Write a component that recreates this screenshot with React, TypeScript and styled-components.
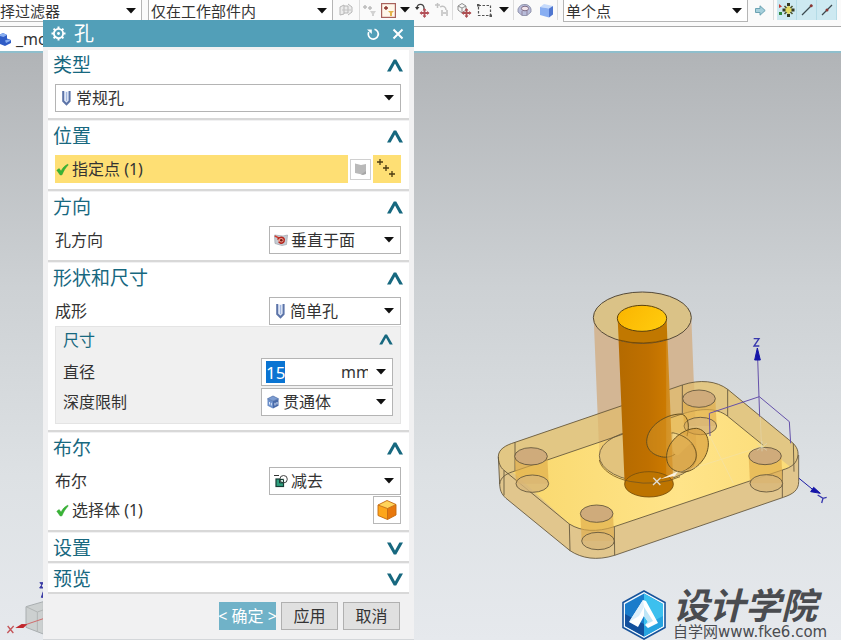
import React, { useEffect, useRef, type ReactNode } from "react";
import styled, { createGlobalStyle, css } from "styled-components";

const GlobalStyle = createGlobalStyle`
  * { box-sizing: border-box; }
  body {
    margin: 0;
    font-family: "Noto Sans", "Noto Sans CJK SC", sans-serif;
    font-size: 16px;
    color: #333;
    overflow: hidden;
  }
  button, select, input { font: inherit; color: inherit; }
  svg { display: block; flex: none; }
`;

const Page = styled.div`
  position: relative;
  display: flex;
  flex-direction: column;
  min-height: 100vh;
`;

/* ---------- top bars ---------- */

const Toolbar = styled.header`
  display: flex;
  align-items: flex-start;
  height: 27px;
  background: #fafafa;
  border-bottom: 1px solid #a9a9a9;
  overflow: hidden;
`;

const ToolSelect = styled.label<{ $w: number; $flush?: boolean }>`
  display: flex;
  align-items: center;
  width: ${(p) => p.$w}px;
  height: 22px;
  padding: 0 5px 0 ${(p) => (p.$flush ? 0 : 2)}px;
  background: #fff;
  border: 1px solid #b5b5b5;
  border-top: 0;
  ${(p) => p.$flush && "border-left: 0;"}
  font-size: 15px;
  flex: none;
`;

const PlainSelect = styled.select`
  flex: 1;
  min-width: 0;
  height: 100%;
  padding: 0;
  border: 0;
  outline: 0;
  background: transparent;
  appearance: none;
`;

const ToolGroup = styled.div<{ $w: number }>`
  display: flex;
  align-items: center;
  justify-content: space-around;
  width: ${(p) => p.$w}px;
  height: 20px;
  border-right: 1px solid #dcdcdc;
  flex: none;
`;

const IconButton = styled.button<{ $on?: boolean }>`
  display: flex;
  align-items: center;
  justify-content: center;
  min-width: 12px;
  height: 20px;
  padding: 0;
  border: 0;
  background: transparent;
  ${(p) =>
    p.$on &&
    css`
      width: 20px;
      background: #cde9f1;
      border-right: 1px solid #b4dbe6;
    `}
`;

const Spacer = styled.div<{ $w: number }>`
  width: ${(p) => p.$w}px;
  flex: none;
`;

const TabStrip = styled.nav`
  display: flex;
  align-items: center;
  gap: 4px;
  height: 26px;
  background: #fff;
  border-bottom: 2px solid #8fbfcd;
`;

const Viewport = styled.main`
  position: relative;
  flex: 1;
  background: linear-gradient(#b1b4b7 0%, #cdd1d4 40%, #dde1e4 72%, #e6e9ed 100%);
`;

const ModelView = styled.svg`
  position: absolute;
  right: 0;
  top: 227px;
`;

const Triad = styled.svg`
  position: absolute;
  left: 0;
  bottom: 0;
`;

const Watermark = styled.div`
  position: absolute;
  right: 9px;
  bottom: 0;
  display: flex;
  align-items: flex-end;
  gap: 7px;
`;

const Brand = styled.div`
  display: flex;
  flex-direction: column;
  gap: 4px;
  min-width: 159px;
  color: #4a4c50;
`;

const BrandName = styled.strong`
  font: italic 700 36px/36px "Noto Sans CJK SC", sans-serif;
`;

const BrandUrl = styled.span`
  font: 15px/15px "DejaVu Sans", "Noto Sans CJK SC", sans-serif;
  white-space: nowrap;
`;

/* ---------- dialog ---------- */

const Dialog = styled.section`
  position: absolute;
  left: 43px;
  top: 20px;
  width: 371px;
  background: #f1f1f2;
  border-bottom: 1px solid #d4d7da;
`;

const TitleBar = styled.div`
  display: flex;
  align-items: center;
  height: 27px;
  padding: 0 9px 0 8px;
  background: #529fb8;
  color: #fff;
`;

const DialogTitle = styled.h1`
  flex: 1;
  margin: 0 0 0 8px;
  font-size: 20px;
  line-height: 26px;
  font-weight: 400;
`;

const TitleButton = styled.button`
  margin-left: 11px;
  padding: 0;
  border: 0;
  background: none;
  color: #fff;
`;

const Groups = styled.div`
  display: flex;
  flex-direction: column;
  gap: 1px;
  padding: 3px 5px 0;
`;

const Group = styled.section`
  background: #fff;
  border-bottom: 2px solid #d8d8d8;
`;

const GroupHeader = styled.button`
  display: flex;
  align-items: center;
  justify-content: space-between;
  width: 100%;
  height: 28px;
  padding: 2px 6px 0 5px;
  border: 0;
  background: none;
  color: #17687f;
  font-size: 19px;
  line-height: 26px;
`;

const GroupBody = styled.div`
  display: flex;
  flex-direction: column;
  gap: 1px;
  padding: 6px 8px 6px 7px;
`;

const Row = styled.div`
  display: flex;
  align-items: center;
  justify-content: space-between;
  height: 28px;
  line-height: 20px;
`;

const Field = styled.label<{ $full?: boolean }>`
  display: flex;
  align-items: center;
  gap: 3px;
  width: ${(p) => (p.$full ? "100%" : "132px")};
  height: 28px;
  padding: 0 6px 0 4px;
  border: 1px solid #b4b4b4;
  background: #fff;
`;

const SizeBox = styled.section`
  padding: 0 7px 7px;
  background: #f0f0f0;
  border: 1px solid #e4e4e4;
`;

const SizeHeader = styled.button`
  display: flex;
  align-items: center;
  justify-content: space-between;
  width: 100%;
  height: 31px;
  padding: 0 0 6px;
  border: 0;
  background: none;
  color: #17687f;
  line-height: 20px;
`;

const SizeRows = styled.div`
  display: flex;
  flex-direction: column;
  gap: 2px;
`;

const ValueInput = styled.input`
  flex: 1;
  min-width: 0;
  height: 22px;
  padding: 0;
  border: 0;
  outline: 0;
  font-size: 17px;
  background: transparent;
  &::selection { background: #0a74d2; color: #fff; }
`;

const UnitSelect = styled(PlainSelect)`
  flex: none;
  width: 27px;
  text-overflow: clip;
`;

const PickRow = styled(Row)`
  gap: 2px;
`;

const PickLabel = styled.div<{ $active?: boolean }>`
  display: flex;
  flex: 1;
  align-items: center;
  gap: 3px;
  height: 28px;
  padding-left: 1px;
  background: ${(p) => (p.$active ? "#fedf74" : "transparent")};
`;

const SmallTool = styled.button`
  display: flex;
  align-items: center;
  justify-content: center;
  width: 21px;
  height: 21px;
  padding: 0;
  border: 1px solid #d0d0d0;
  background: #fff;
`;

const LargeTool = styled.button<{ $active?: boolean }>`
  display: flex;
  align-items: center;
  justify-content: center;
  width: 28px;
  height: 28px;
  padding: 0;
  border: ${(p) => (p.$active ? "0" : "1px solid #b8b8b8")};
  background: ${(p) => (p.$active ? "#fedf74" : "#fff")};
`;

const Footer = styled.div`
  display: flex;
  justify-content: flex-end;
  gap: 5px;
  padding: 8px 14px 9px;
`;

const ActionButton = styled.button<{ $primary?: boolean }>`
  display: flex;
  align-items: center;
  justify-content: center;
  width: 57px;
  height: 28px;
  padding: 0;
  line-height: 20px;
  white-space: nowrap;
  border: 1px solid ${(p) => (p.$primary ? "#70b2c8" : "#b0b0b0")};
  background: ${(p) => (p.$primary ? "#70b2c8" : "#e0e0e0")};
  color: ${(p) => (p.$primary ? "#fff" : "#333")};
`;

/* ---------- icons ---------- */

const Caret = () => (
  <svg width="10" height="6" viewBox="0 0 10 6"><path d="M0 0H10L5 5.6Z" fill="#111" /></svg>
);

const Chevron = ({ down, small }: { down?: boolean; small?: boolean }) => (
  <svg width={small ? 14 : 16} height={small ? 11 : 13} viewBox="0 0 16 13">
    <path d={down ? "M0 .5H3.6L8 8.5 12.4.5H16L9.2 12.5H6.8Z" : "M0 12.5H3.6L8 4.5 12.4 12.5H16L9.2.5H6.8Z"} fill="#17687f" />
  </svg>
);

const Check = () => (
  <svg width="13" height="13" viewBox="0 0 13 13">
    <path d="M.8 7.2 3.2 5.6 5 8.2C6.6 5 8.6 2.6 11.8 1.2L12.2 2C9.6 4.6 7.6 7.8 6 11.8L4.2 12Z" fill="#38b535" stroke="#2a9d2a" strokeWidth=".5" />
  </svg>
);

const HoleIcon = () => (
  <svg width="13" height="16" viewBox="0 0 13 16">
    <path d="M3 1.5V11L6.5 14.8 10 11V1.5Z" fill="#dfe7f7" />
    <path d="M3.2 1V11L6.5 14.3 9.6 11V1" fill="none" stroke="#5c74a8" strokeWidth="2" />
    <path d="M6.6 2V11" stroke="#9db3dc" />
  </svg>
);

const NormalIcon = () => (
  <svg width="14" height="14" viewBox="0 0 14 14">
    <path d="M.5 2 9 3 13.5 2 12.5 11.5 8 12.5 1 10.5Z" fill="#c6ccd4" stroke="#a0a6ae" strokeWidth=".7" />
    <path d="m.8 3 4.5 2.2" stroke="#d03c31" strokeWidth="1.5" />
    <path d="M3.5 6.5C5 3.5 9.5 3.6 10.3 6.5 10.5 9.5 8 10.6 6.4 10L4.6 8.8" fill="#eba595" stroke="#b6261e" strokeWidth="1.4" />
    <circle cx="7.3" cy="7.2" r="1.3" fill="#7c1a14" />
  </svg>
);

const ThroughIcon = () => (
  <svg width="14" height="14" viewBox="0 0 14 14">
    <path d="M1.5 3.8 7 6V13.4L1.5 10.8Z" fill="#6b8fc9" />
    <path d="M12.5 3.8 7 6V13.4L12.5 10.8Z" fill="#486aa8" />
    <path d="M1.5 3.8 7 1 12.5 3.8 7 6Z" fill="#7d9dd2" stroke="#5474ac" strokeWidth=".8" />
    <path d="M3.5 7V9.5M5.3 7.8V10.5M9 7.8V10.5M11 7V9.5" stroke="#dce7fa" />
  </svg>
);

const SubtractIcon = () => (
  <svg width="14" height="14" viewBox="0 0 14 14">
    <path d="M0 1.5H5" stroke="#333" />
    <rect x="2" y="5" width="7.5" height="7.5" fill="#2fa07e" stroke="#173d35" strokeWidth="1.2" />
    <circle cx="9.6" cy="5.2" r="3.7" fill="#fff" fillOpacity=".75" stroke="#444" />
    <path d="M5.5 9V5.5H9.5V8.8Z" fill="none" stroke="#173d35" />
  </svg>
);

const CubeIcon = () => (
  <svg width="22" height="22" viewBox="0 0 22 22">
    <path d="M2 6 11.5 9.5V20.5L2 16.5Z" fill="#fda61b" />
    <path d="M20 5.5 11.5 9.5V20.5L20 16Z" fill="#e8780c" />
    <path d="M2 6 11 1.5 20 5.5 11.5 9.5Z" fill="#ffd45a" />
    <path d="M2 6 11 1.5 20 5.5V16L11.5 20.5 2 16.5ZM2 6 11.5 9.5 20 5.5M11.5 9.5V20.5" fill="none" stroke="#c4690e" strokeWidth=".9" />
  </svg>
);

const PointsIcon = () => (
  <svg width="22" height="22" viewBox="0 0 22 22">
    <path d="M1 4H7M4 1V7M7 10H13M10 7V13M13 16H19M16 13V19" stroke="#4b3b12" strokeWidth="1.3" />
  </svg>
);

const SketchIcon = () => (
  <svg width="13" height="14" viewBox="0 0 13 14">
    <path d="M1 1.5 7 3 12 2V11L8 12.5 1 11Z" fill="#b9b9b9" /><path d="M7 12.5 12 9V12L9 13Z" fill="#a6a6a6" />
  </svg>
);

const GearIcon = () => (
  <svg width="15" height="15" viewBox="0 0 15 15">
    <circle cx="7.5" cy="7.5" r="4.6" fill="none" stroke="#fff" strokeWidth="1.8" />
    <circle cx="7.5" cy="7.5" r="1.4" fill="#fff" />
    <path d="M7.5 .5V3M7.5 12V14.5M.5 7.5H3M12 7.5H14.5M2.6 2.6 4.2 4.2M10.8 10.8 12.4 12.4M2.6 12.4 4.2 10.8M10.8 4.2 12.4 2.6" stroke="#fff" strokeWidth="2" />
  </svg>
);

const ResetIcon = () => (
  <svg width="14" height="14" viewBox="0 0 14 14">
    <path d="M8.5 2.2A5 5 0 1 1 2.7 5" fill="none" stroke="#fff" strokeWidth="1.7" />
    <path d="M1 2.5H5.8V7Z" fill="#fff" />
  </svg>
);

const CloseIcon = () => (
  <svg width="14" height="14" viewBox="0 0 14 14"><path d="M2.5 2.5 11.5 11.5M11.5 2.5 2.5 11.5" stroke="#fff" strokeWidth="2" /></svg>
);

const GhostIcon = () => (
  <svg width="16" height="16" viewBox="0 0 16 16">
    <path d="M2 5 6 3V12L2 13ZM6 4H10V11H6M10 2 14 5V10L10 13" fill="#ececec" stroke="#b7b7b7" />
    <path d="M4 8H13" stroke="#c4c4c4" />
  </svg>
);

const GhostPoints = () => (
  <svg width="15" height="16" viewBox="0 0 15 16">
    <path d="M1 5H5M3 3V7M6 6H10M8 4V8" stroke="#bdbdbd" strokeWidth="1.5" />
    <path d="M8 9H14L12 12V14H10V12Z" fill="#d2d2d2" />
  </svg>
);

const FilterBoxIcon = () => (
  <svg width="15" height="15" viewBox="0 0 15 15">
    <rect x=".6" y=".6" width="13.8" height="13.8" fill="#fff7ea" stroke="#a8625c" strokeWidth="1.2" />
    <path d="M3 5H7M5 3V7" stroke="#8b2f28" strokeWidth="1.3" />
    <path d="M7 8H13L11 10V13H9V10Z" fill="#e3b34c" />
  </svg>
);

const TurnIcon = () => (
  <svg width="15" height="16" viewBox="0 0 15 16">
    <path d="M2 6C2 1.5 9 1 9 6V8" fill="none" stroke="#444" strokeWidth="1.3" />
    <path d="M0 5 2 8 4.5 5Z" fill="#333" />
    <path d="M9.5 7V15M5.5 11H13.5" stroke="#b35058" strokeWidth="1.8" />
    <path d="M9.5 6 7.5 8.5H11.5ZM9.5 16 7.5 13.5H11.5ZM4.5 11 7 9V13ZM14.5 11 12 9V13Z" fill="#b35058" />
  </svg>
);

const GhostTurn = () => (
  <svg width="16" height="16" viewBox="0 0 16 16">
    <path d="M1 3H6M3.5 1V6M6 5C9 3 12 5 12 8" fill="none" stroke="#c2c2c2" strokeWidth="1.5" />
    <path d="M8 8V14M13 8V14M8 11H13" stroke="#cdcdcd" strokeWidth="2" />
  </svg>
);

const BoxMoveIcon = () => (
  <svg width="16" height="16" viewBox="0 0 16 16">
    <path d="M2 4 6 1.5 10 4V8L6 11 2 8ZM2 4 6 6 10 4M6 6V11" fill="#f5f5f5" stroke="#8f8f8f" />
    <path d="M10.5 7V15M6.5 11H14.5" stroke="#ad4f52" strokeWidth="1.8" />
    <path d="M10.5 6 8.5 8.5H12.5ZM10.5 16 8.5 13.5H12.5ZM5.5 11 8 9V13ZM15.5 11 13 9V13Z" fill="#ad4f52" />
  </svg>
);

const MarqueeIcon = () => (
  <svg width="15" height="13" viewBox="0 0 15 13">
    <rect x="1.5" y="1.5" width="12" height="10" fill="none" stroke="#555" strokeWidth="1.2" strokeDasharray="2.5 1.5" />
    <path d="M0 0H2.5V2.5H0ZM12.5 10.5H15V13H12.5Z" fill="#555" />
  </svg>
);

const DiscIcon = () => (
  <svg width="15" height="14" viewBox="0 0 15 14">
    <path d="M1 6C3 2 5 1.5 8 1.5S13 3 14 6V9L10 12.5H5L1 9Z" fill="#b8bcda" stroke="#8386a0" strokeWidth=".8" />
    <ellipse cx="8" cy="5.5" rx="3.6" ry="2.3" fill="#f1e4ea" stroke="#7e6d86" />
    <path d="M5 8V12M10 8V12" stroke="#8d819c" />
  </svg>
);

const BlueBox = () => (
  <svg width="15" height="15" viewBox="0 0 15 15">
    <path d="M1 4 5 1 14 3 10 5.5Z" fill="#c5dafc" />
    <path d="M1 4 10 5.5V14.5L1 12Z" fill="#88aef2" />
    <path d="M10 5.5 14 3V11.5L10 14.5Z" fill="#4f76d0" />
  </svg>
);

const ArrowIcon = () => (
  <svg width="11" height="11" viewBox="0 0 11 11"><path d="M.5 3.5H5V.8L10.2 5.5 5 10.2V7.5H.5Z" fill="#a5cfdb" stroke="#6ba2b2" /></svg>
);

const SnapIcon = () => (
  <svg width="16" height="14" viewBox="0 0 16 14">
    <path d="M0 1 3 3.5 0 5Z" fill="#c43b34" /><path d="M0 9H3V12H0Z" fill="#2d8a40" />
    <path d="M9.5 2.5 14 7 9.5 11.5 5 7Z" fill="#e0da62" />
    <path d="M8 0H11V3H8ZM8 11H11V14H8ZM3.5 5.5H6.5V8.5H3.5ZM12.5 5.5H15.5V8.5H12.5Z" fill="#343a25" />
    <path d="M5.5 3 7.5 5M13.5 3 11.5 5M5.5 11 7.5 9M13.5 11 11.5 9" stroke="#4c5430" strokeWidth="1.6" />
  </svg>
);

const LineIcon = ({ mid }: { mid?: boolean }) => (
  <svg width="12" height="12" viewBox="0 0 12 12">
    <path d="M1 11 11 1" stroke="#3c4a4f" strokeWidth="1.3" />
    <circle cx={mid ? 6 : 10.2} cy={mid ? 6 : 1.8} r="1.5" fill="#8a3532" />
  </svg>
);

const PartIcon = () => (
  <svg width="12" height="15" viewBox="0 0 12 15">
    <path d="M0 2.5 3 1 7 3V6.5L11 8V11L5 14 0 12Z" fill="#2f5cc6" />
    <path d="M0 2.5 3 1 7 3 3.5 5 0 4ZM5 8.5 8 7.5 11 8.5 6 11Z" fill="#88aef1" />
  </svg>
);

const Hexagon = () => (
  <svg width="44" height="50" viewBox="0 0 44 50">
    <path d="M22 1 43 12.5V37.5L22 49 1 37.5V12.5Z" fill="#f4fbff" stroke="#17539b" strokeWidth="1.6" />
    <path d="M22 3.5 41 14V36L22 46.5 3 36V14Z" fill="#1a7ccb" />
    <path d="M22 3.5 41 14V36L22 46.5Z" fill="#3cc0ee" />
    <path d="M3 24 22 34V46.5L3 36Z" fill="#12509d" />
    <path d="M22 36 41 26V36L22 46.5Z" fill="#26a3e0" />
    <path d="M21 10 7 32 16 37 22 26 26 32 23 35 26 38 36 33 24 11Z" fill="#fff" />
    <path d="M22 17 22 26 26 32 23 35 31 31Z" fill="#bfe6f7" />
    <path d="M21 10 22 17 17 26 7 32Z" fill="#dceffb" />
  </svg>
);

/* ---------- 3D scene ---------- */

const holes = [
  { x: 657, y: 356 },
  { x: 153, y: 529 },
  { x: 855, y: 528 },
  { x: 350, y: 701 },
];

const Model = () => (
  <ModelView width="361" height="290" viewBox="0 0 1083 870" role="img" aria-label="3D">
    <defs>
      <linearGradient id="bore" x1="0" x2="1">
        <stop offset="0" stopColor="#b46a00" /><stop offset=".55" stopColor="#bf7000" />
        <stop offset=".86" stopColor="#cb7900" /><stop offset=".88" stopColor="#d08a1c" /><stop offset="1" stopColor="#d5922c" />
      </linearGradient>
      <linearGradient id="boreTop" x1="0" x2="1" y2=".4"><stop offset="0" stopColor="#fab400" /><stop offset="1" stopColor="#ffc90c" /></linearGradient>
      <linearGradient id="floor" x1="0" x2="1"><stop offset="0" stopColor="#f9d86d" /><stop offset=".6" stopColor="#ffe489" /><stop offset="1" stopColor="#fbdc78" /></linearGradient>
    </defs>
    <path d="M341 113 358 527A146 78 0 0 0 650 527L634 113Z" fill="#d3b694" />
    <path d="M55 530C55 508 76 496 105 487L607 315C660 297 710 303 743 328L925 478C944 492 955 505 954 525L956 605C956 630 940 642 910 652L404 826C350 843 305 835 270 812L78 655C63 641 60 630 59 612Z" fill="#e1c68d" />
    <path d="M55 530C55 508 76 496 105 487L607 315C660 297 710 303 743 328L925 478C950 496 955 510 954 525 951 550 935 562 907 570L403 740C350 757 305 755 268 732L72 571C60 562 55 545 55 530Z" fill="#e2c784" />
    <path d="M98 575 600 404C660 384 708 382 742 408L930 560 907 570 403 740C350 757 305 755 268 732Z" fill="url(#floor)" />
    <path d="M353 400 430 374V470L358 527ZM560 331 642 306 650 527 560 470Z" fill="#cf9a55" fillOpacity=".28" />
    <ellipse cx="504" cy="527" rx="146" ry="78" fill="#e2c37d" stroke="#65553a" strokeWidth="2.5" />
    <g fill="none" stroke="#5d5138" strokeWidth="2.5">
      <path d="M55 530C55 508 76 496 105 487L607 315C660 297 710 303 743 328L925 478C950 496 955 510 954 525 951 550 935 562 907 570L403 740C350 757 305 755 268 732L72 571C60 562 55 545 55 530Z" />
      <path d="M59 612C60 630 63 641 78 655L270 812C305 835 350 843 404 826L910 652C940 642 956 630 956 605V525M55 530 59 612M268 732 270 812M403 740 404 826M907 570V652" />
      <path d="M105 487V572M607 315V400M743 328V408M72 571V646M940 490 942 575" />
      <path d="M59 612C62 590 80 580 108 572L600 404C660 384 708 382 742 408L850 496" />
    </g>
    {holes.map((h) => (
      <g key={h.x} stroke="#5d5138" strokeWidth="2.5">
        <path d={`M${h.x - 49} ${h.y}L${h.x - 45} ${h.y + 82}H${h.x + 53}L${h.x + 49} ${h.y}Z`} fill="#dfac49" fillOpacity=".65" stroke="none" />
        <ellipse cx={h.x + 4} cy={h.y + 82} rx="49" ry="26" fill="#d8b779" fillOpacity=".8" />
        <ellipse cx={h.x} cy={h.y} rx="49" ry="26" fill="#cfab7b" />
      </g>
    ))}
    <path d="M413 115 434 613A73 38 0 0 0 580 613L560 115Z" fill="url(#bore)" />
    <ellipse cx="507" cy="613" rx="73" ry="38" fill="#bd7400" stroke="#76510e" strokeWidth="2.5" />
    <path d="M358 540A146 78 0 0 0 600 590" fill="none" stroke="#75551f" strokeWidth="2.5" />
    <ellipse cx="487" cy="113" rx="147" ry="77" fill="#dac287" stroke="#554a38" strokeWidth="3" />
    <path d="M413 118A74 39 0 0 0 560 118L562 178A147 77 0 0 1 416 180Z" fill="#c17800" />
    <path d="M417 180A147 77 0 0 0 562 178" fill="none" stroke="#7b4c00" strokeWidth="3" />
    <ellipse cx="486" cy="115" rx="74" ry="39" fill="url(#boreTop)" stroke="#5b420e" strokeWidth="3" />
    <g stroke="#66501f" strokeWidth="3">
      <path d="M500 485C500 440 555 402 603 402 630 407 632 455 610 494 588 531 560 540 526 524 508 515 500 500 500 485Z" fill="#dba33a" fillOpacity=".35" />
      <path d="M578 458C606 456 628 469 641 487 624 492 606 517 594 526 576 525 575 500 578 458Z" fill="#f0d487" stroke="none" />
      <path d="M560 535C556 490 605 445 650 445 684 450 696 492 674 532 648 574 608 586 580 569 567 561 561 549 560 535Z" fill="#d79b35" fillOpacity=".65" />
      <path d="M577 458C630 468 658 506 646 541 638 557 622 570 604 576" fill="none" strokeWidth="2.5" />
    </g>
    <path d="M540 598 594 574 585 587Z" fill="#f8f2e2" />
    <path d="M520 593 541 615M542 593 519 615" stroke="#e1ded5" strokeWidth="4" />
    <path d="M838 350 845 505M688 465 760 610M590 580 845 500" stroke="#e9e4d4" strokeWidth="2" opacity=".45" />
    <path d="M832 491 861 511M861 490 832 511M846 483V514" stroke="#ddd9bd" strokeWidth="2" />
    <path d="M690 468 688 400 838 350 928 425 932 490M833 235 839 410" fill="none" stroke="#6551aa" strokeWidth="3" />
    <path d="M957 595 1000 630" stroke="#1b1ba4" strokeWidth="3" />
    <path d="M832 204 841 240H824ZM992 635 1001 622 1021 640Z" fill="#1515a8" stroke="#1515a8" strokeWidth="3" />
    <path d="M821 176H837L822 198H838M1013 645 1029 655 1040 652M1029 655 1025 669" stroke="#3737ad" strokeWidth="4" fill="none" />
  </ModelView>
);

/* ---------- composed controls ---------- */

type FieldProps = { id: string; label: string; value: string; icon: ReactNode; full?: boolean };

const SelectField = ({ id, label, value, icon, full }: FieldProps) => (
  <Field $full={full}>
    {icon}
    <PlainSelect id={id} aria-label={label}><option>{value}</option></PlainSelect>
    <Caret />
  </Field>
);

const Section = ({ title, children }: { title: string; children?: ReactNode }) => (
  <Group>
    <GroupHeader aria-expanded={!!children}>{title}<Chevron down={!children} /></GroupHeader>
    {children && <GroupBody>{children}</GroupBody>}
  </Group>
);

const HoleDialog = () => {
  const diameter = useRef<HTMLInputElement>(null);
  useEffect(() => {
    diameter.current?.focus();
    diameter.current?.select();
  }, []);
  return (
    <Dialog role="dialog" aria-label="孔">
      <TitleBar>
        <GearIcon />
        <DialogTitle>孔</DialogTitle>
        <TitleButton aria-label="重置"><ResetIcon /></TitleButton>
        <TitleButton aria-label="关闭"><CloseIcon /></TitleButton>
      </TitleBar>
      <Groups>
        <Section title="类型">
          <SelectField full id="type" label="类型" value="常规孔" icon={<HoleIcon />} />
        </Section>
        <Section title="位置">
          <PickRow>
            <PickLabel $active><Check />指定点 (1)</PickLabel>
            <SmallTool aria-label="草图"><SketchIcon /></SmallTool>
            <LargeTool $active aria-label="点"><PointsIcon /></LargeTool>
          </PickRow>
        </Section>
        <Section title="方向">
          <Row>
            <label htmlFor="direction">孔方向</label>
            <SelectField id="direction" label="孔方向" value="垂直于面" icon={<NormalIcon />} />
          </Row>
        </Section>
        <Section title="形状和尺寸">
          <Row>
            <label htmlFor="form">成形</label>
            <SelectField id="form" label="成形" value="简单孔" icon={<HoleIcon />} />
          </Row>
          <SizeBox>
            <SizeHeader aria-expanded>尺寸<Chevron small /></SizeHeader>
            <SizeRows>
              <Row>
                <label htmlFor="diameter">直径</label>
                <Field as="div">
                  <ValueInput id="diameter" ref={diameter} defaultValue="15" />
                  <UnitSelect aria-label="单位"><option>mm</option></UnitSelect>
                  <Spacer $w={2} />
                  <Caret />
                </Field>
              </Row>
              <Row>
                <label htmlFor="depth">深度限制</label>
                <SelectField id="depth" label="深度限制" value="贯通体" icon={<ThroughIcon />} />
              </Row>
            </SizeRows>
          </SizeBox>
        </Section>
        <Section title="布尔">
          <Row>
            <label htmlFor="boolean">布尔</label>
            <SelectField id="boolean" label="布尔" value="减去" icon={<SubtractIcon />} />
          </Row>
          <PickRow>
            <PickLabel><Check />选择体 (1)</PickLabel>
            <LargeTool aria-label="选择体"><CubeIcon /></LargeTool>
          </PickRow>
        </Section>
        <Section title="设置" />
        <Section title="预览" />
      </Groups>
      <Footer>
        <ActionButton $primary>&lt; 确定 &gt;</ActionButton>
        <ActionButton>应用</ActionButton>
        <ActionButton>取消</ActionButton>
      </Footer>
    </Dialog>
  );
};

export default function App() {
  return (
    <Page>
      <GlobalStyle />
      <Toolbar>
        <ToolSelect $w={142} $flush>
          <PlainSelect aria-label="过滤器"><option>择过滤器</option></PlainSelect><Caret />
        </ToolSelect>
        <Spacer $w={6} />
        <ToolSelect $w={185}>
          <PlainSelect aria-label="范围"><option>仅在工作部件内</option></PlainSelect><Caret />
        </ToolSelect>
        <ToolGroup $w={27}><IconButton aria-label="装配"><GhostIcon /></IconButton></ToolGroup>
        <ToolGroup $w={93}>
          <IconButton aria-label="捕捉"><GhostPoints /></IconButton>
          <IconButton aria-label="过滤"><FilterBoxIcon /></IconButton>
          <IconButton aria-label="更多过滤"><Caret /></IconButton>
          <IconButton aria-label="旋转"><TurnIcon /></IconButton>
          <IconButton aria-label="复位"><GhostTurn /></IconButton>
        </ToolGroup>
        <ToolGroup $w={61}>
          <IconButton aria-label="移动体"><BoxMoveIcon /></IconButton>
          <IconButton aria-label="框选"><MarqueeIcon /></IconButton>
          <IconButton aria-label="更多框选"><Caret /></IconButton>
        </ToolGroup>
        <ToolGroup $w={44}>
          <IconButton aria-label="面"><DiscIcon /></IconButton>
          <IconButton aria-label="体"><BlueBox /></IconButton>
        </ToolGroup>
        <Spacer $w={5} />
        <ToolSelect $w={185}>
          <PlainSelect aria-label="点"><option>单个点</option></PlainSelect><Caret />
        </ToolSelect>
        <ToolGroup $w={26}><IconButton aria-label="下一个"><ArrowIcon /></IconButton></ToolGroup>
        <Spacer $w={3} />
        <IconButton $on aria-label="捕捉点"><SnapIcon /></IconButton>
        <IconButton $on aria-label="端点"><LineIcon /></IconButton>
        <IconButton $on aria-label="中点"><LineIcon mid /></IconButton>
      </Toolbar>
      <TabStrip><PartIcon /><span>_mo</span></TabStrip>
      <Viewport>
        <Model />
        <Triad width="60" height="80" viewBox="0 0 180 240">
          <path d="M78 140 130 125V222L78 202Z" fill="#ccd0d0" stroke="#a9aeb0" strokeWidth="3" />
          <path d="M78 140 112 156 112 216M112 156 135 148" fill="none" stroke="#b1b5b5" strokeWidth="3" />
          <path d="M50 203 130 176" stroke="#cf6d6d" strokeWidth="3" />
          <path d="M46 204 65 192 82 193 70 204Z" fill="#c1272d" />
          <path d="M23 198 40 219M41 198 22 219" stroke="#c5565a" strokeWidth="4" />
          <path d="M119 68H130L119 84H130M124 112 130 95V112Z" stroke="#3b3ba5" strokeWidth="3" fill="#3b3ba5" />
        </Triad>
        <Watermark>
          <Hexagon />
          <Brand><BrandName>设计学院</BrandName><BrandUrl>自学网www.fke6.com</BrandUrl></Brand>
        </Watermark>
      </Viewport>
      <HoleDialog />
    </Page>
  );
}
